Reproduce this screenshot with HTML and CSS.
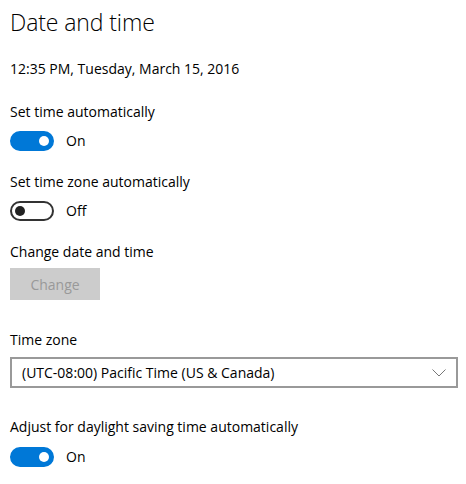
FILE: index.html
```html
<!DOCTYPE html>
<html>
<head>
<meta charset="utf-8">
<link rel="stylesheet" href="styles.css">
</head>
<body>
<div class="page">
  <h1 class="title">Date and time</h1>
  <div class="now">12:35 PM, Tuesday, March 15, 2016</div>

  <div class="label l1">Set time automatically</div>
  <div class="toggle-row">
    <span class="toggle on"><span class="knob"></span></span>
    <span class="state">On</span>
  </div>

  <div class="label l2">Set time zone automatically</div>
  <div class="toggle-row">
    <span class="toggle off"><span class="knob"></span></span>
    <span class="state">Off</span>
  </div>

  <div class="label l2">Change date and time</div>
  <button class="btn" disabled>Change</button>

  <div class="label l3">Time zone</div>
  <div class="select">
    <span class="select-text">(UTC-08:00) Pacific Time (US &amp; Canada)</span>
    <svg class="chev" width="14" height="8" viewBox="0 0 14 8"><path d="M0.5 0.5 L7 7 L13.5 0.5" fill="none" stroke="#777" stroke-width="1"/></svg>
  </div>

  <div class="label l4">Adjust for daylight saving time automatically</div>
  <div class="toggle-row last">
    <span class="toggle on"><span class="knob"></span></span>
    <span class="state">On</span>
  </div>
</div>
</body>
</html>
```

FILE: styles.css
```css
html, body {
  margin: 0;
  padding: 0;
  background: #fff;
}
body {
  font-family: "Open Sans", "Noto Sans", sans-serif;
  color: #000;
  font-size: 14px;
}
.page {
  padding: 6px 10px;
}
.title {
  margin: 0;
  font-size: 23px;
  font-weight: 300;
  line-height: 32px;
  letter-spacing: -0.1px;
}
.now {
  margin-top: 21px;
  line-height: 20px;
}
.label {
  line-height: 20px;
}
.l1 { margin-top: 23px; }
.l2 { margin-top: 21px; }
.l3 { margin-top: 30px; }
.l4 { margin-top: 29px; }
.toggle-row {
  margin-top: 9px;
  height: 20px;
  display: flex;
  align-items: center;
  gap: 12px;
}
.toggle-row.last { margin-top: 10px; }
.toggle {
  box-sizing: border-box;
  width: 44px;
  height: 20px;
  border-radius: 10px;
  border: 2px solid #333;
  display: flex;
  align-items: center;
  padding: 0 3px;
}
.toggle.on {
  background: #0078d7;
  border-color: #0078d7;
  justify-content: flex-end;
}
.toggle.off {
  background: #fff;
  justify-content: flex-start;
}
.knob {
  width: 10px;
  height: 10px;
  border-radius: 50%;
  background: #fff;
}
.toggle.off .knob { background: #222; }
.state {
  line-height: 20px;
}
.btn {
  display: block;
  margin-top: 6px;
  width: 90px;
  height: 32px;
  border: 0;
  background: #cccccc;
  color: #999;
  font-family: inherit;
  font-size: 14px;
  padding: 0;
}
.select {
  margin-top: 7px;
  box-sizing: border-box;
  width: 448px;
  height: 31px;
  border: 2px solid #999;
  display: flex;
  align-items: center;
  justify-content: space-between;
  padding: 0 10px 0 10px;
}
.chev { display: block; }
```
